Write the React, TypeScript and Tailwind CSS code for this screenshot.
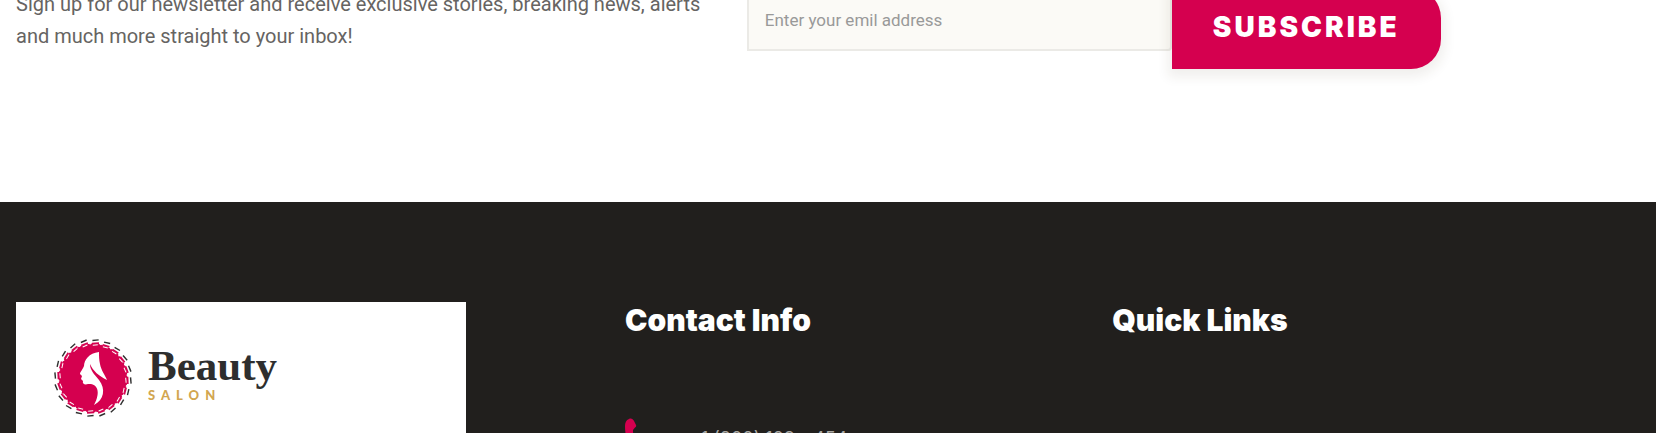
import type { FormEvent } from 'react'

const LogoMark = () => (
  <svg viewBox="0 0 80 80" className="size-20 shrink-0" aria-hidden="true">
    <circle cx="40" cy="40" r="34.5" fill="#d5004f" />
    {/* stitched edge */}
    {Array.from({ length: 20 }, (_, i) => (
      <g key={i} transform={`rotate(${i * 18 + 4} 40 40)`}>
        <path d="M36.500 5.600 L43.500 4.800" stroke="#d5004f" strokeWidth="1.6" />
        <path d="M36.800 2.600 L43 1.600" stroke="#2e2e2e" strokeWidth="1.4" />
        <path d="M37.500 7.400 L42.500 6.600" stroke="#ffffff" strokeWidth="1" />
        <path d="M45.200 6.600 L46.200 4.200" stroke="#ffffff" strokeWidth="1.4" />
      </g>
    ))}
    <path
      d="M46 14 C36 15 31 22 31 28 C30 31 27 34 27 36 L29 38 L28 41 L30 43 C29 46 32 47 35 46 C43 45 49 52 41 67 C51 62 53 51 46 42 C41 36 37 32 37 26 C40 33 46 38 54 42 C52 37 48 32 47 26 C46 22 46 18 46 14Z"
      fill="#ffffff"
    />
  </svg>
)

function Newsletter() {
  const handleSubmit = (e: FormEvent) => e.preventDefault()

  return (
    <section className="-mt-3 grid grid-cols-[45%_1fr] px-4 pb-[133px]">
      <p className="pr-4 font-['Roboto'] text-[20px] leading-8 text-[#666462]">
        Sign up for our newsletter and receive exclusive stories, breaking news, alerts and much more straight to your inbox!
      </p>
      <form onSubmit={handleSubmit} className="flex items-start">
        <input
          type="email"
          aria-label="Email address"
          placeholder="Enter your emil address"
          className="h-[63px] w-[425px] rounded-r-sm border-2 border-[#ebeae6] bg-[#fbfaf6] px-4 font-['Roboto'] text-[17px] outline-none placeholder:text-[#999999]"
        />
        <button
          type="submit"
          className="h-[81px] w-[269px] rounded-r-[30px] bg-[#d5004f] pb-1 text-[28px] font-black tracking-[3px] text-white shadow-[0_4px_12px_4px_rgba(60,50,20,0.08)]"
        >
          SUBSCRIBE
        </button>
      </form>
    </section>
  )
}

function Footer() {
  return (
    <footer className="grow bg-[#211f1d] px-4 pt-[100px]">
      <div className="grid grid-cols-[37.5%_30%_1fr]">
        <div className="mr-[159px] bg-white px-[37px] pt-9 pb-16">
          <a href="#" className="flex items-center gap-[15px]">
            <LogoMark />
            <span className="pb-2">
              <span className="block font-['Liberation_Serif'] text-[43px] leading-10 font-bold text-[#2e2e2e]">Beauty</span>
              <span className="block pt-px font-['Lato'] text-[13px] leading-4 font-black tracking-[6px] text-[#d2a650]">SALON</span>
            </span>
          </a>
        </div>
        <div>
          <h2 className="text-[30px] leading-9 font-black text-white">Contact Info</h2>
          <a href="tel:+1800123454" className="mt-20 flex items-start gap-[52px] text-[18px] leading-8 text-[#aaa8a4]">
            <svg viewBox="0 0 12 36" className="h-9 w-3 shrink-0" fill="#d5004f" aria-hidden="true">
              <path d="M4 1 C6 0 8 1 9 3 L11 7 C11.500 8 11 9 10 9.500 L8 12 C8 18 9 22 12 27 V36 C4 31 0 20 0 8 C0 5 1 2 4 1Z" />
            </svg>
            <span className="pt-[5px]">+1 (800) 123 - 454</span>
          </a>
        </div>
        <div>
          <h2 className="text-[30px] leading-9 font-black text-white">Quick Links</h2>
        </div>
      </div>
    </footer>
  )
}

export default function App() {
  return (
    <div className="flex h-screen flex-col overflow-hidden bg-white font-['Inter',sans-serif]">
      <Newsletter />
      <Footer />
    </div>
  )
}
